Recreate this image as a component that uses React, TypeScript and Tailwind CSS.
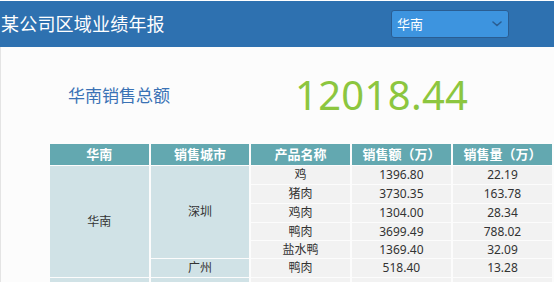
export default function App() {
  const rows = [
    { product: '鸡', amount: '1396.80', qty: '22.19', h: 'h-[18px]' },
    { product: '猪肉', amount: '3730.35', qty: '163.78', h: 'h-[18px]' },
    { product: '鸡肉', amount: '1304.00', qty: '28.34', h: 'h-[18px]' },
    { product: '鸭肉', amount: '3699.49', qty: '788.02', h: 'h-[17px]' },
    { product: '盐水鸭', amount: '1369.40', qty: '32.09', h: 'h-[17px]' },
  ]

  return (
    <div className="w-[554px] h-[282px] overflow-hidden bg-white font-['Noto_Sans','Noto_Sans_CJK_SC',sans-serif]">
      {/* Top bar */}
      <div className="mt-px h-[46px] bg-[#2e71b0] flex items-center justify-between">
        <h1 className="pl-px text-[18px] leading-none text-white tracking-[0.2px]">某公司区域业绩年报</h1>
        <div className="mr-[45px] w-[118px] h-[28px] rounded-[3px] border border-[#2a5d92] bg-[#3d94df] flex items-center justify-between pl-[5px] pr-[6px]">
          <span className="text-[13px] text-white leading-none">华南</span>
          <svg width="10" height="6" viewBox="0 0 10 6" fill="none">
            <path d="M1 1l4 3.5L9 1" stroke="#2b5e92" strokeWidth="1.6" strokeLinecap="round" />
          </svg>
        </div>
      </div>

      {/* Body */}
      <div className="h-[235px] bg-[#fcfcfc] border-l border-[#e4e4e4]">
        <div className="h-[96px] flex items-center">
          <div className="ml-[67px] text-[17px] text-[#3a72b5] leading-none">华南销售总额</div>
          <div className="ml-[125px] text-[40px] text-[#8cc63f] leading-none tracking-[0.3px]">12018.44</div>
        </div>

        <table className="ml-[47px] table-fixed border-separate border-spacing-x-[2px] border-spacing-y-px text-center">
          <thead>
            <tr className="h-[21px] bg-[#63a8b0] text-white text-[13px] font-semibold">
              <th className="w-[100px] p-0 font-semibold">华南</th>
              <th className="w-[100px] p-0 font-semibold">销售城市</th>
              <th className="w-[100px] p-0 font-semibold">产品名称</th>
              <th className="w-[100px] p-0 font-semibold">销售额（万）</th>
              <th className="w-[100px] p-0 font-semibold">销售量（万）</th>
            </tr>
          </thead>
          <tbody className="text-[12px] text-[#333] leading-none">
            {rows.map((r, i) => (
              <tr key={i} className={r.h}>
                {i === 0 && (
                  <td rowSpan={6} className="p-0 bg-[#d0e2e6]">华南</td>
                )}
                {i === 0 && (
                  <td rowSpan={5} className="p-0 bg-[#d0e2e6]">深圳</td>
                )}
                <td className="p-0 bg-[#f2f2f2]">{r.product}</td>
                <td className="p-0 bg-[#f2f2f2]">{r.amount}</td>
                <td className="p-0 bg-[#f2f2f2]">{r.qty}</td>
              </tr>
            ))}
            <tr className="h-[18px]">
              <td className="p-0 bg-[#d0e2e6]">广州</td>
              <td className="p-0 bg-[#f2f2f2]">鸭肉</td>
              <td className="p-0 bg-[#f2f2f2]">518.40</td>
              <td className="p-0 bg-[#f2f2f2]">13.28</td>
            </tr>
            <tr className="h-[18px]">
              <td className="p-0 bg-[#d0e2e6]"></td>
              <td className="p-0 bg-[#d0e2e6]"></td>
              <td className="p-0 bg-[#f2f2f2]"></td>
              <td className="p-0 bg-[#f2f2f2]"></td>
              <td className="p-0 bg-[#f2f2f2]"></td>
            </tr>
          </tbody>
        </table>
      </div>
    </div>
  )
}
